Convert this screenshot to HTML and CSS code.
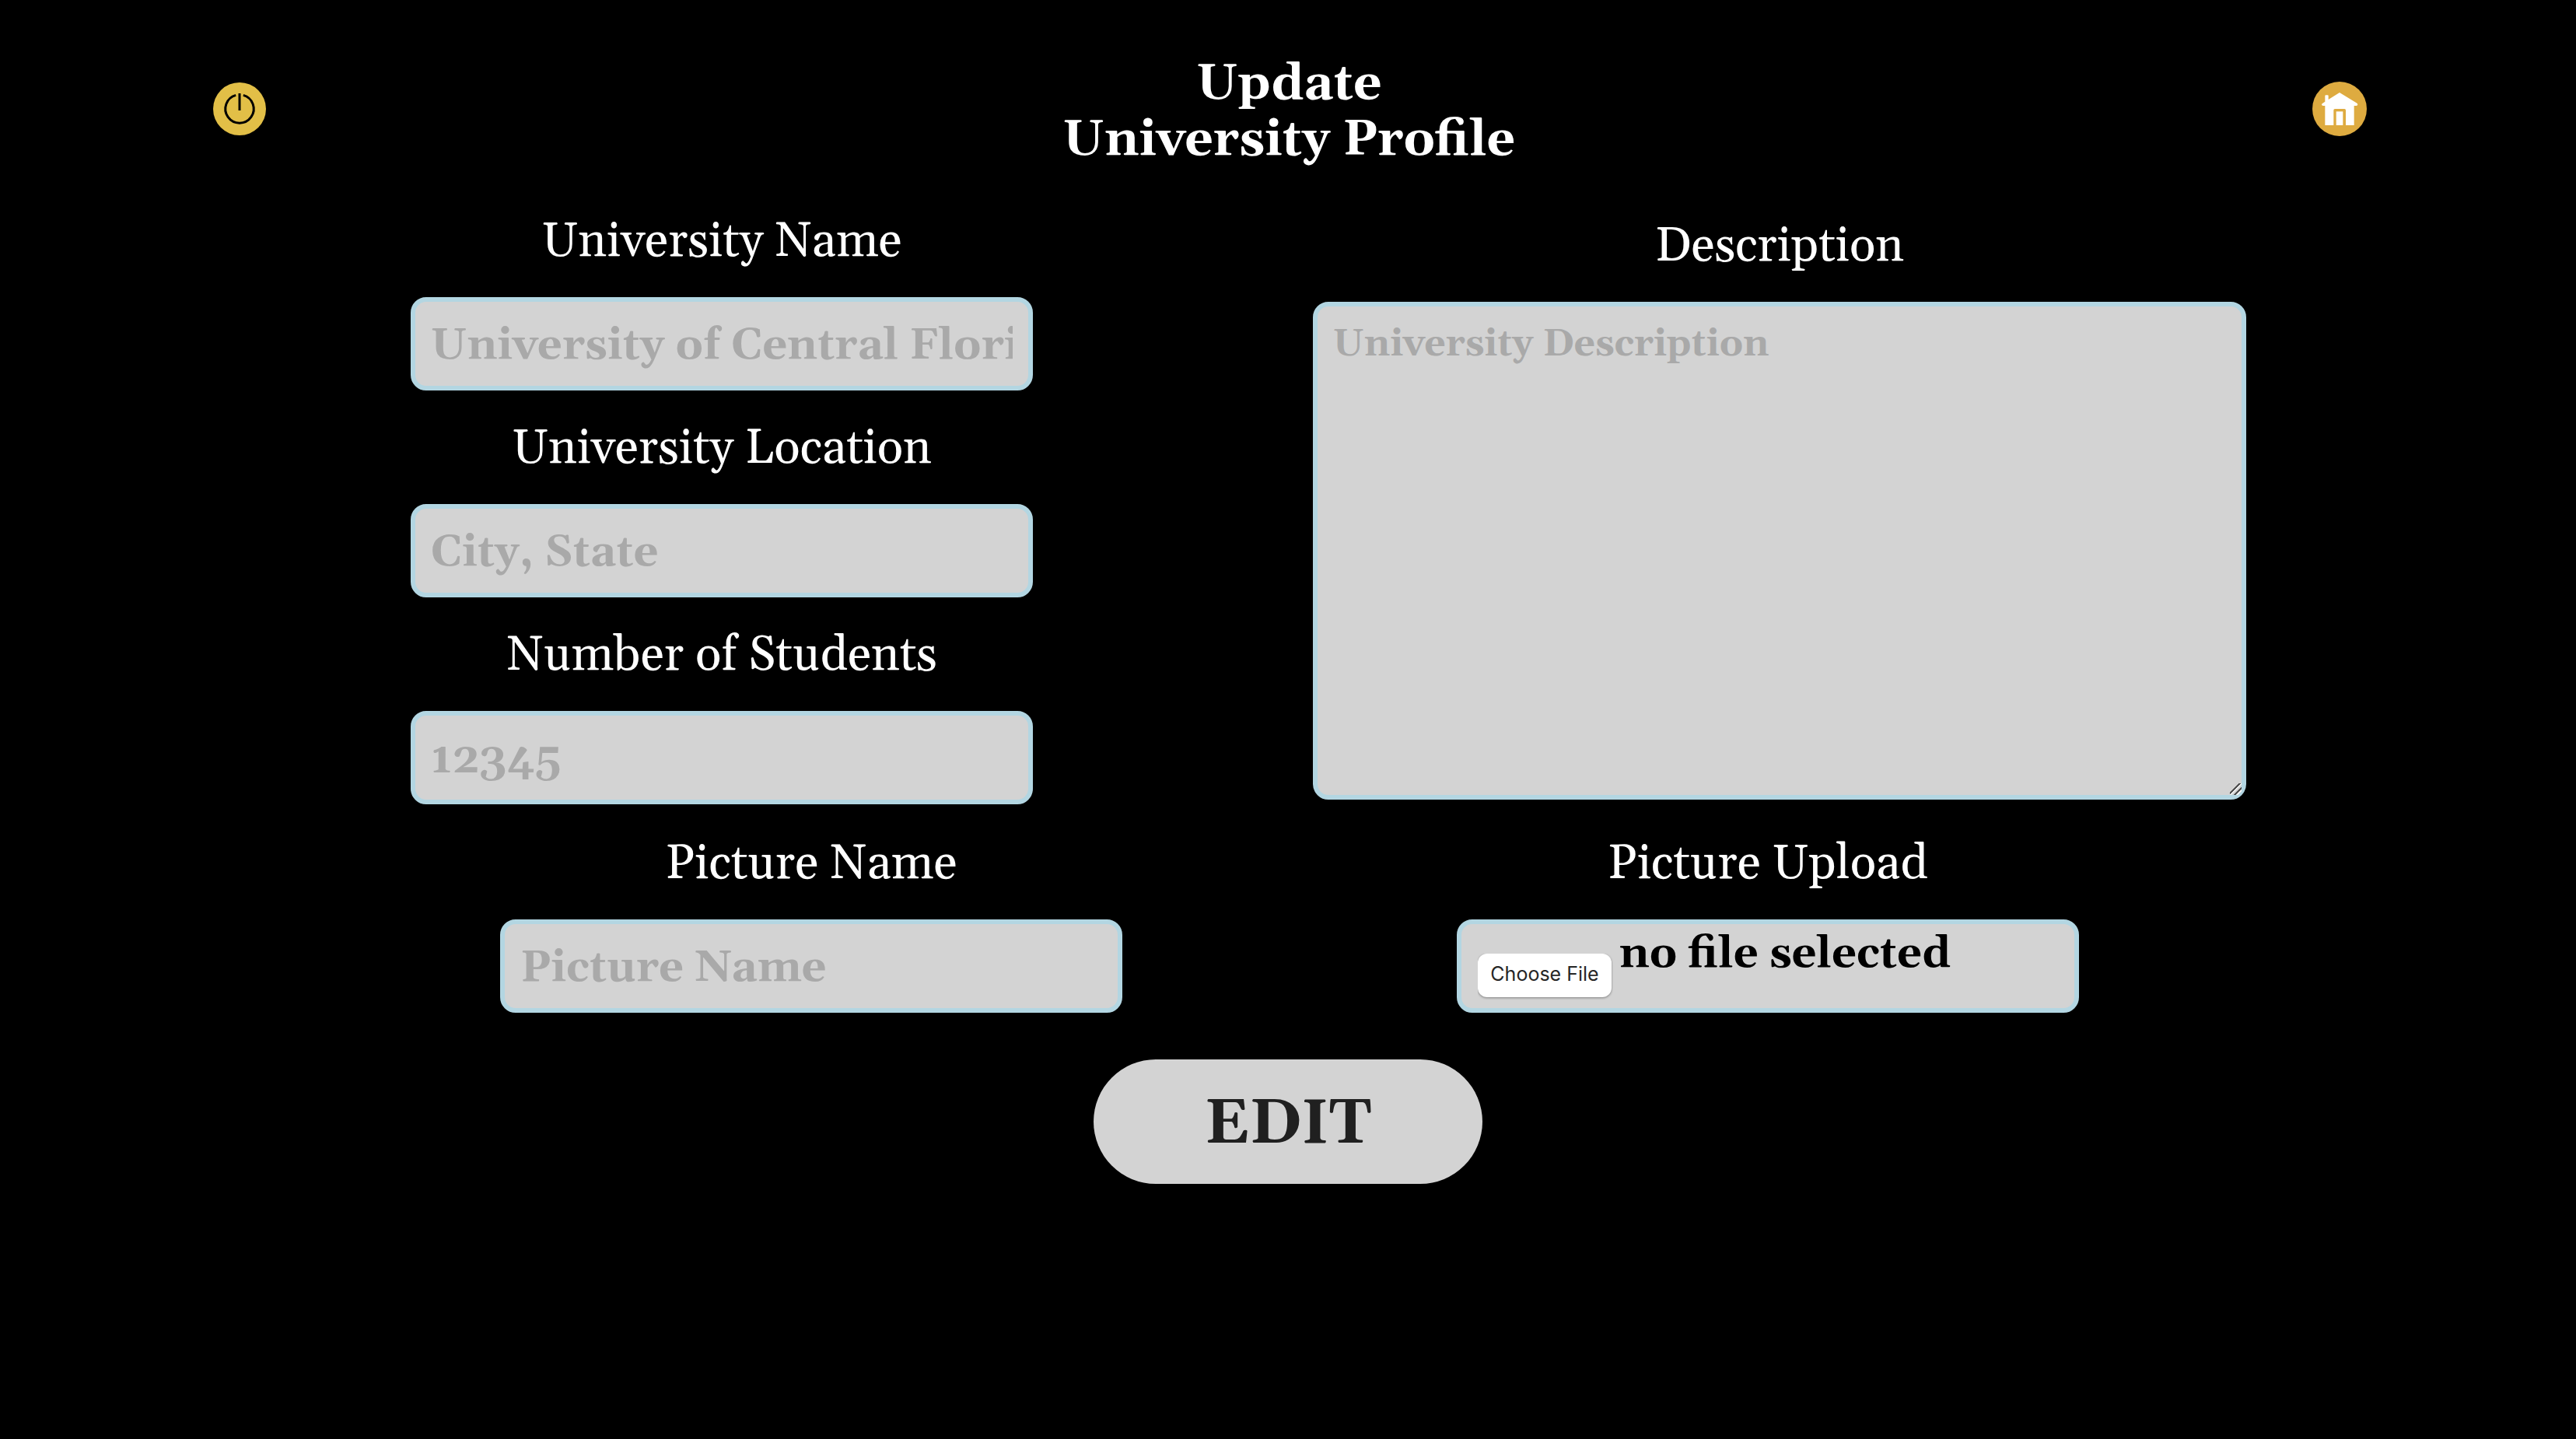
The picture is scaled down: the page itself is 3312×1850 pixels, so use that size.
FILE: index.html
```html
<!DOCTYPE html>
<html lang="en">
<head>
  <meta charset="utf-8">
  <meta name="viewport" content="width=device-width, initial-scale=1">
  <title>Update University Profile</title>
  <link rel="stylesheet" href="styles.css">
</head>
<body>
  <header class="header">
    <button class="icon-button" type="button" aria-label="Log out">
      <svg class="icon icon-power" viewBox="0 0 68 68" aria-hidden="true">
        <circle cx="34" cy="34" r="34" fill="#e2bf47"/>
        <path d="M29.2 16.4a18.2 18.2 0 1 0 9.6 0" fill="none" stroke="#000" stroke-width="3"/>
        <path d="M34 14v22" stroke="#000" stroke-width="3"/>
      </svg>
    </button>
    <h1 class="title">Update<br>University Profile</h1>
    <a class="icon-button" href="#" aria-label="Home">
      <svg class="icon icon-home" viewBox="0 0 210 210" aria-hidden="true">
        <circle cx="105" cy="105" r="105" fill="#deab40"/>
        <path d="M49 168V93h-7q-6 0-6-5 0-3 4-5l9-6V55q0-3 3-3h7q3 0 3 3v14l43-27 65 40q5 3 5 6 0 5-6 5h-8v75h-32v-58q0-5-5-5H87q-5 0-5 5v58Z" fill="#fff"/>
        <path d="M92 115h26v53H92Z" fill="#fff"/>
      </svg>
    </a>
  </header>

  <form class="form">
    <div class="row row-details">
      <div class="column">
        <div class="field">
          <label class="label" for="name">University Name</label>
          <input class="control" id="name" type="text" placeholder="University of Central Florida">
        </div>
        <div class="field">
          <label class="label" for="location">University Location</label>
          <input class="control" id="location" type="text" placeholder="City, State">
        </div>
        <div class="field">
          <label class="label" for="students">Number of Students</label>
          <input class="control" id="students" type="text" inputmode="numeric" placeholder="12345">
        </div>
      </div>
      <div class="field field-wide">
        <label class="label" for="description">Description</label>
        <textarea class="control control-area" id="description" placeholder="University Description"></textarea>
      </div>
    </div>

    <div class="row row-picture">
      <div class="field">
        <label class="label" for="picture-name">Picture Name</label>
        <input class="control" id="picture-name" type="text" placeholder="Picture Name">
      </div>
      <div class="field">
        <label class="label" for="picture">Picture Upload</label>
        <div class="control control-file">
          <input class="file-input" id="picture" type="file">
          <span class="file-status">no file selected</span>
        </div>
      </div>
    </div>

    <button class="submit" type="submit">EDIT</button>
  </form>
</body>
</html>
```

FILE: styles.css
```css
* {
  box-sizing: border-box;
}

body {
  margin: 0;
  background: #000;
  color: #fff;
  font-family: Georgia, Gelasio, "Liberation Serif", serif;
}

.header {
  display: flex;
  align-items: center;
  justify-content: space-between;
  padding: 63px 269px 19px 274px;
}

.title {
  margin: 0;
  padding-top: 10px;
  font-size: 64px;
  line-height: 72px;
  text-align: center;
}

.icon-button {
  display: block;
  padding: 0;
  border: 0;
  background: none;
  cursor: pointer;
}

.icon {
  display: block;
}

.icon-power {
  width: 68px;
  height: 68px;
}

.icon-home {
  width: 70px;
  height: 70px;
}

.form {
  display: flex;
  flex-direction: column;
}

.row {
  display: flex;
  align-items: center;
  justify-content: space-between;
}

.row-details {
  padding: 0 424px 0 528px;
}

.row-picture {
  padding: 2px 639px 60px 643px;
}

.column,
.field {
  display: flex;
  flex-direction: column;
}

.field {
  width: 800px;
}

.field-wide {
  width: 1200px;
}

.label {
  padding: 37px 0 33px;
  font-size: 62px;
  line-height: 76px;
  text-align: center;
}

.control {
  width: 100%;
  height: 120px;
  padding: 4px 20px 0;
  border: 6px solid #b3d6e2;
  border-radius: 20px;
  background: #d3d3d3;
  color: #000;
  font-family: inherit;
  font-size: 56px;
  font-weight: bold;
}

.control::placeholder {
  color: #a9a9a9;
  opacity: 1;
}

.control-area {
  display: block;
  height: 640px;
  padding: 22px 20px;
  font-size: 48px;
  line-height: 54px;
  resize: both;
}

.control-area::-webkit-resizer {
  background: linear-gradient(135deg, transparent 8px, #505050 8px 10px, #f4f4f4 10px 12px, transparent 12px 14px, #505050 14px 16px, #f4f4f4 16px 18px, transparent 18px);
}

.control-file {
  display: flex;
  align-items: flex-start;
  gap: 8px;
  padding: 0 21px;
}

.file-input {
  width: 174px;
  height: 60px;
  margin-top: 38px;
  overflow: hidden;
  color: transparent;
  font-family: Inter, sans-serif;
  font-size: 25px;
  font-weight: normal;
}

.file-input::file-selector-button {
  width: 172px;
  height: 56px;
  margin: 0 2px 0 0;
  padding: 0 0 4px;
  border: 0;
  border-radius: 12px;
  background: #fff;
  box-shadow: 0 1px 3px rgba(0, 0, 0, 0.4);
  color: #262626;
  font: inherit;
}

.file-status {
  line-height: 78px;
}

.submit {
  align-self: center;
  width: 500px;
  height: 160px;
  padding: 6px 0 0;
  border: 0;
  border-radius: 80px;
  background: #d3d3d3;
  color: #202020;
  font-family: inherit;
  font-size: 80px;
  font-weight: bold;
}
```
